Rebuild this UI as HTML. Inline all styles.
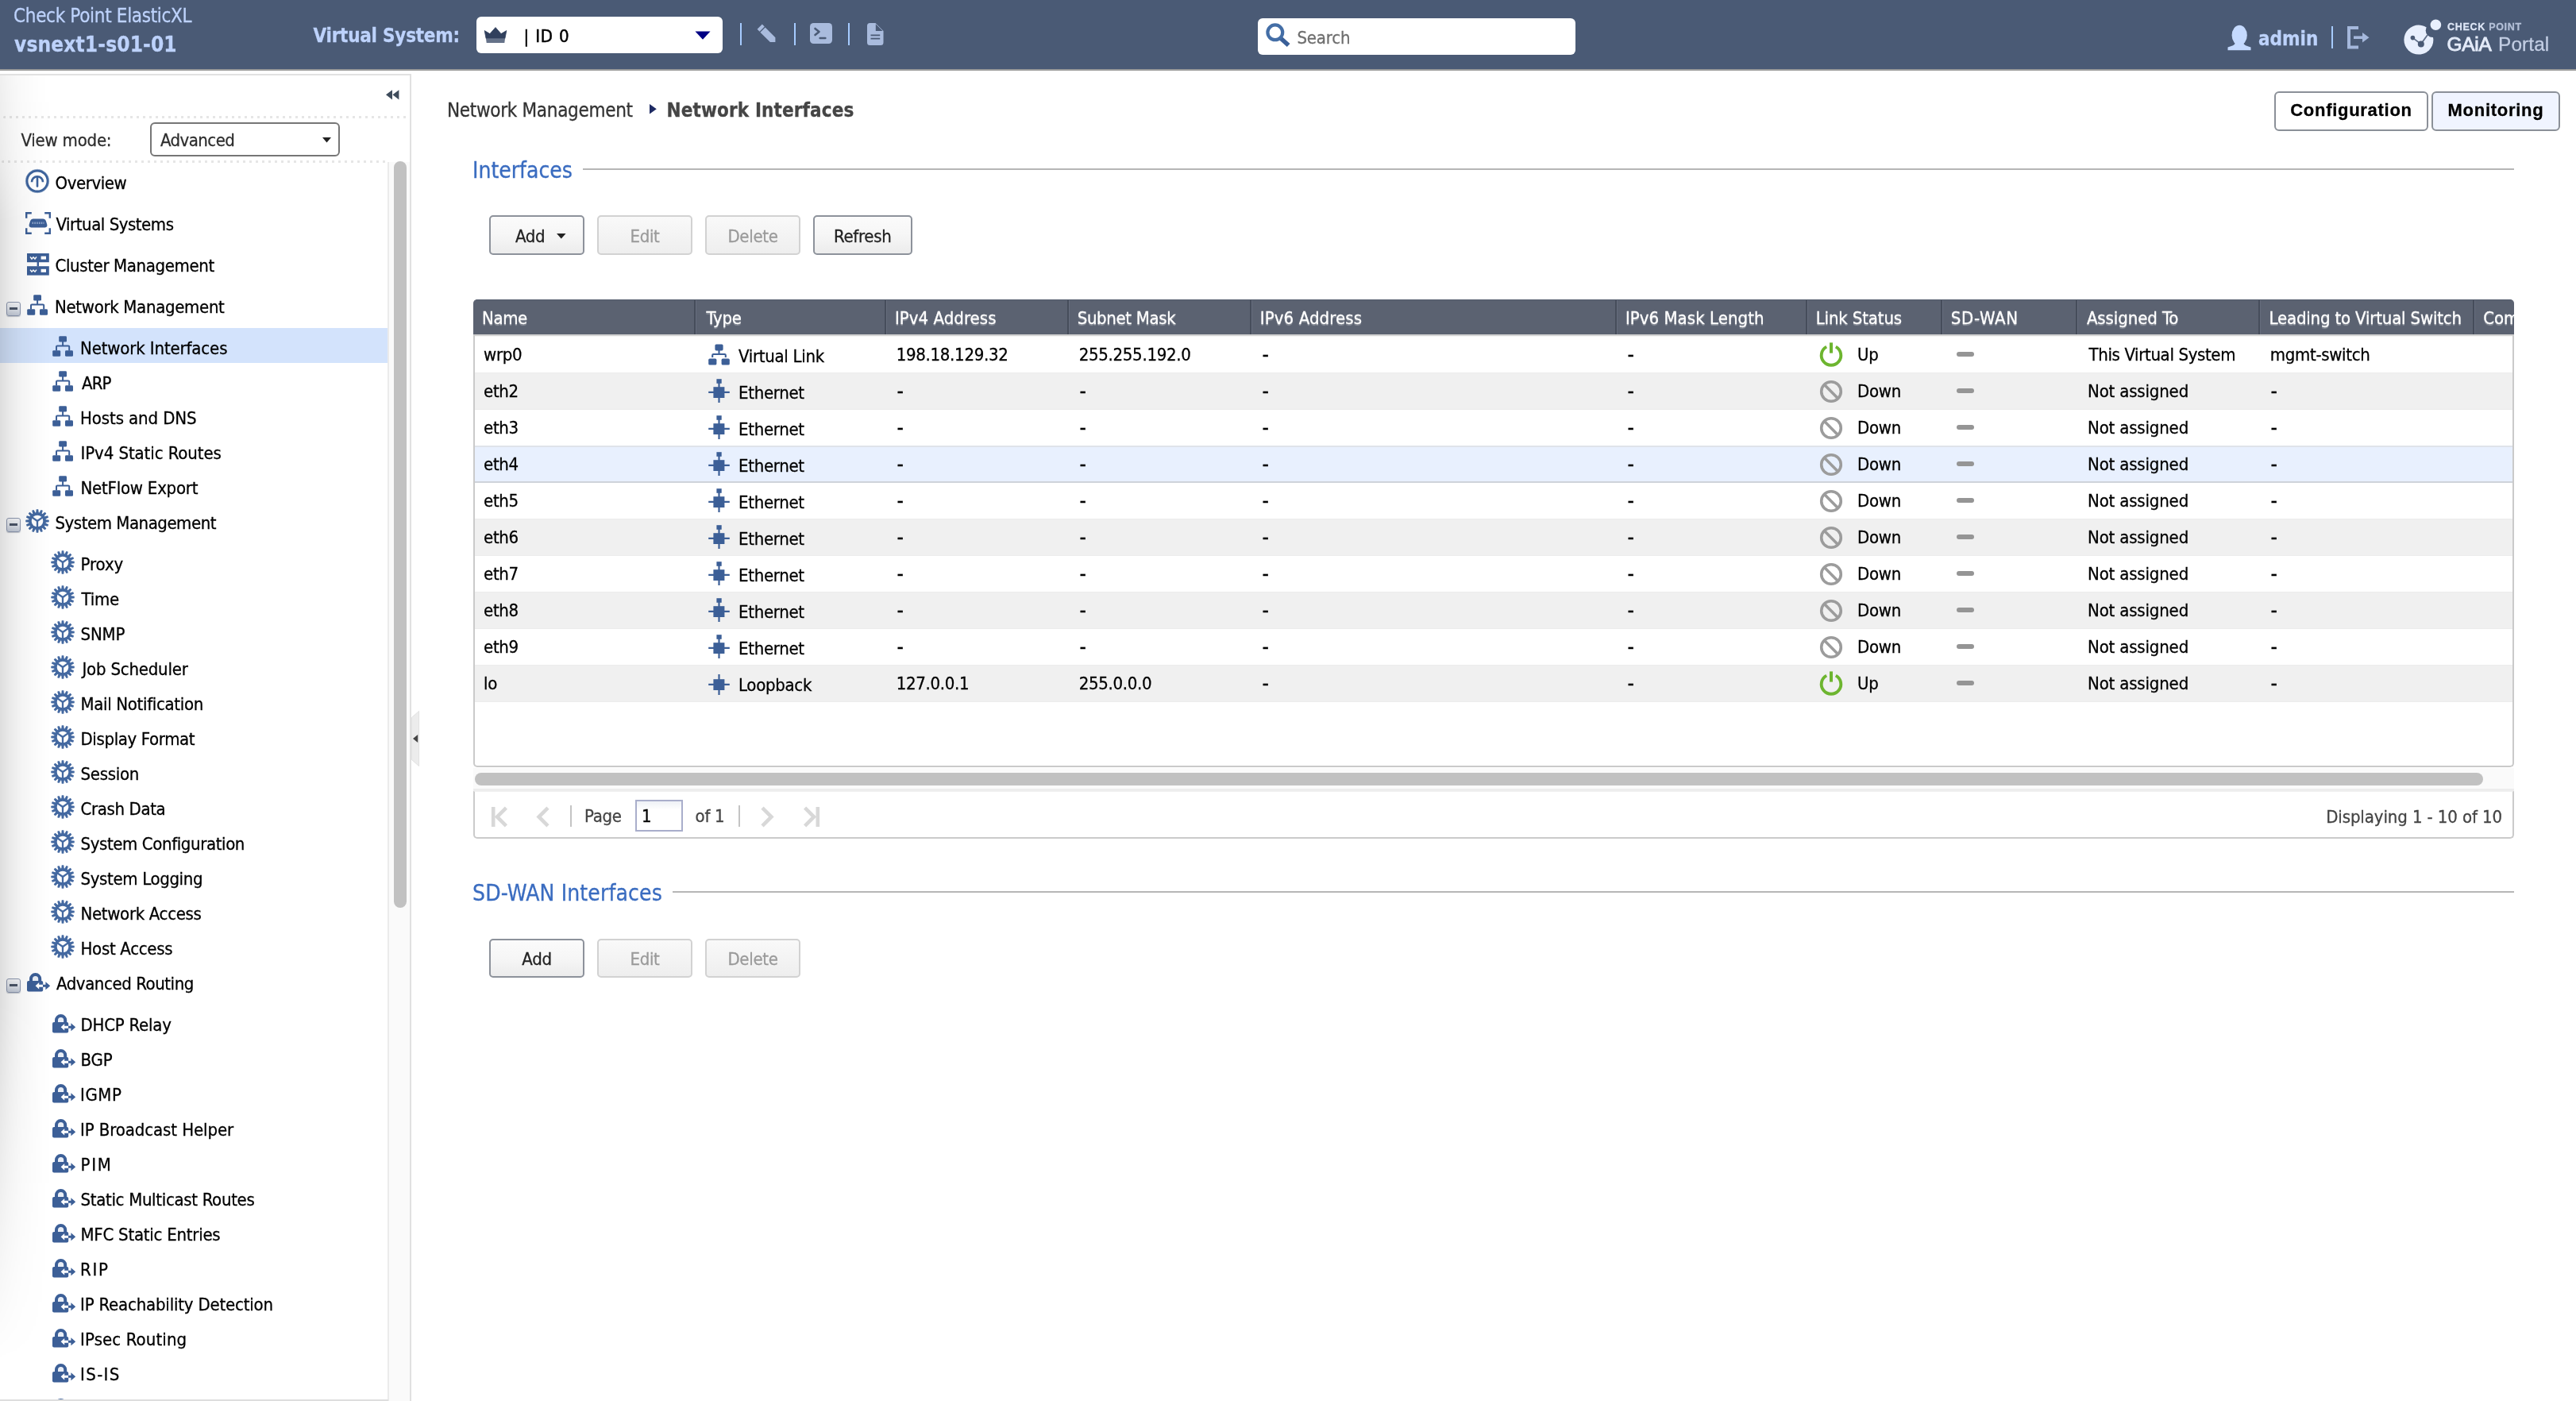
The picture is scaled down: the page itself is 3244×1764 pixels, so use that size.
<!DOCTYPE html>
<html lang="en"><head><meta charset="utf-8"><title>Gaia Portal - Network Interfaces</title>
<style>
html,body{margin:0;padding:0;}
body{width:3244px;height:1764px;overflow:hidden;background:#fff;position:relative;font-family:"DejaVu Sans Condensed","Liberation Sans",sans-serif;}
.a{position:absolute;box-sizing:border-box;}
.t{position:absolute;white-space:nowrap;-webkit-text-stroke:0.28px currentColor;}
svg{overflow:visible;}
.btn{position:absolute;box-sizing:border-box;border:2px solid #8d929b;border-radius:5px;background:linear-gradient(#fbfbfb,#f6f6f6 50%,#ececec);}
.btn.dis{border-color:#d2d2d2;background:linear-gradient(#f9f9f9,#eeeeee);}
.hd{text-shadow:0 2px 1px rgba(255,255,255,.28);}
@media (min-resolution:1.5dppx) and (max-width:2400px){body{width:1622px;height:882px;}#root{transform:scale(.5);transform-origin:0 0;}}
</style></head><body><div id="root" style="position:absolute;left:0;top:0;width:3244px;height:1764px;overflow:hidden;will-change:transform;">
<div class="t" style="left:563px;top:127.30px;font-size:24px;line-height:24px;color:#333;letter-spacing:-0.31px;">Network Management</div>
<svg class="a" style="left:817.5px;top:131px;" width="9" height="12.4" viewBox="0 0 9 12.4"><path d="M0 0 L8.8 6.2 L0 12.4 Z" fill="#1e2a63"/></svg>
<div class="t" style="left:839.5px;top:127.30px;font-size:24px;line-height:24px;color:#454545;font-weight:bold;letter-spacing:0.13px;">Network Interfaces</div>
<div class="a" style="left:2864px;top:115px;width:194px;height:50px;border:2px solid #8b9098;border-radius:6px;background:#fff;"></div>
<div class="t" style="left:2864px;top:128.29px;width:194px;text-align:center;font-family:'Liberation Sans',sans-serif;font-weight:bold;font-size:22px;line-height:22px;color:#000;letter-spacing:.72px;">Configuration</div>
<div class="a" style="left:3062px;top:115px;width:162px;height:50px;border:2px solid #8b9098;border-radius:6px;background:#f0f4ff;"></div>
<div class="t" style="left:3062px;top:128.29px;width:162px;text-align:center;font-family:'Liberation Sans',sans-serif;font-weight:bold;font-size:22px;line-height:22px;color:#000;letter-spacing:.72px;">Monitoring</div>
<div class="t" style="left:595px;top:201.11px;font-size:28px;line-height:28px;color:#3a6cc0;">Interfaces</div><div class="a" style="left:734px;top:212.20000000000002px;width:2432px;height:2px;background:#b6b6b6;"></div>
<div class="btn" style="left:616px;top:271px;width:120px;height:49.5px;"></div><div class="t" style="left:649px;top:286.89px;font-size:22px;line-height:22px;color:#222;letter-spacing:-0.3px;">Add</div><svg class="a" style="left:701px;top:293.6px;" width="11.6" height="6.6" viewBox="0 0 11.6 6.6"><path d="M0 0 H11.6 L5.8 6.6 Z" fill="#222"/></svg>
<div class="btn dis" style="left:752px;top:271px;width:120px;height:49.5px;"></div><div class="t" style="left:752px;top:286.89px;width:120px;text-align:center;font-size:22px;line-height:22px;letter-spacing:-0.3px;color:#9a9a9a;">Edit</div>
<div class="btn dis" style="left:888px;top:271px;width:120px;height:49.5px;"></div><div class="t" style="left:888px;top:286.89px;width:120px;text-align:center;font-size:22px;line-height:22px;letter-spacing:-0.3px;color:#9a9a9a;">Delete</div>
<div class="btn" style="left:1024px;top:271px;width:124.5px;height:49.5px;"></div><div class="t" style="left:1024px;top:286.89px;width:124.5px;text-align:center;font-size:22px;line-height:22px;letter-spacing:-0.3px;color:#222;">Refresh</div>
<div class="a" style="left:596px;top:421px;width:2570px;height:545px;border:2px solid #cacaca;border-top:none;border-radius:0 0 5px 5px;background:#fff;"></div>
<div class="a" style="left:596px;top:377px;width:2570px;height:44px;background:#5b6271;border-top:1px solid #535b6b;border-radius:5px 5px 0 0;overflow:hidden;">
<div class="t hd" style="left:11px;top:11.69px;font-size:22px;line-height:22px;color:#fff;letter-spacing:-0.39px;">Name</div>
<div class="a" style="left:278px;top:0px;width:2px;height:44px;background:#464d5b;"></div>
<div class="a" style="left:280px;top:0px;width:1px;height:44px;background:#666d7d;"></div>
<div class="t hd" style="left:293.50000000000006px;top:11.69px;font-size:22px;line-height:22px;color:#fff;letter-spacing:-0.22px;">Type</div>
<div class="a" style="left:518px;top:0px;width:2px;height:44px;background:#464d5b;"></div>
<div class="a" style="left:520px;top:0px;width:1px;height:44px;background:#666d7d;"></div>
<div class="t hd" style="left:530.9000000000001px;top:11.69px;font-size:22px;line-height:22px;color:#fff;letter-spacing:0.05px;">IPv4 Address</div>
<div class="a" style="left:748px;top:0px;width:2px;height:44px;background:#464d5b;"></div>
<div class="a" style="left:750px;top:0px;width:1px;height:44px;background:#666d7d;"></div>
<div class="t hd" style="left:760.7px;top:11.69px;font-size:22px;line-height:22px;color:#fff;letter-spacing:-0.35px;">Subnet Mask</div>
<div class="a" style="left:978px;top:0px;width:2px;height:44px;background:#464d5b;"></div>
<div class="a" style="left:980px;top:0px;width:1px;height:44px;background:#666d7d;"></div>
<div class="t hd" style="left:990.7px;top:11.69px;font-size:22px;line-height:22px;color:#fff;letter-spacing:0.12px;">IPv6 Address</div>
<div class="a" style="left:1438px;top:0px;width:2px;height:44px;background:#464d5b;"></div>
<div class="a" style="left:1440px;top:0px;width:1px;height:44px;background:#666d7d;"></div>
<div class="t hd" style="left:1450.9px;top:11.69px;font-size:22px;line-height:22px;color:#fff;letter-spacing:0.05px;">IPv6 Mask Length</div>
<div class="a" style="left:1678px;top:0px;width:2px;height:44px;background:#464d5b;"></div>
<div class="a" style="left:1680px;top:0px;width:1px;height:44px;background:#666d7d;"></div>
<div class="t hd" style="left:1690.6999999999998px;top:11.69px;font-size:22px;line-height:22px;color:#fff;letter-spacing:-0.14px;">Link Status</div>
<div class="a" style="left:1848px;top:0px;width:2px;height:44px;background:#464d5b;"></div>
<div class="a" style="left:1850px;top:0px;width:1px;height:44px;background:#666d7d;"></div>
<div class="t hd" style="left:1860.6999999999998px;top:11.69px;font-size:22px;line-height:22px;color:#fff;letter-spacing:0.73px;">SD-WAN</div>
<div class="a" style="left:2018px;top:0px;width:2px;height:44px;background:#464d5b;"></div>
<div class="a" style="left:2020px;top:0px;width:1px;height:44px;background:#666d7d;"></div>
<div class="t hd" style="left:2031.8999999999999px;top:11.69px;font-size:22px;line-height:22px;color:#fff;letter-spacing:-0.09px;">Assigned To</div>
<div class="a" style="left:2248px;top:0px;width:2px;height:44px;background:#464d5b;"></div>
<div class="a" style="left:2250px;top:0px;width:1px;height:44px;background:#666d7d;"></div>
<div class="t hd" style="left:2261.5px;top:11.69px;font-size:22px;line-height:22px;color:#fff;letter-spacing:-0.18px;">Leading to Virtual Switch</div>
<div class="a" style="left:2518px;top:0px;width:2px;height:44px;background:#464d5b;"></div>
<div class="a" style="left:2520px;top:0px;width:1px;height:44px;background:#666d7d;"></div>
<div class="t hd" style="left:2531.2px;top:11.69px;font-size:22px;line-height:22px;color:#fff;">Comment</div>
</div>
<div class="a" style="left:598px;top:421px;width:2566px;height:3px;background:linear-gradient(#d3d3d3,#d3d3d3 66%,#f6f6f6 66%);"></div>
<div class="t" style="left:609px;top:435.59px;font-size:22px;line-height:22px;color:#000;letter-spacing:-0.3px;">wrp0</div>
<svg class="a" style="left:891.5px;top:432.6px;" width="27" height="27" viewBox="0 0 27 27"><rect x="8.4" y="0.4" width="10.2" height="8" rx="1.6" fill="#3c5f97"/><rect x="0.2" y="18.6" width="10.2" height="8" rx="1.6" fill="#3c5f97"/><rect x="16.6" y="18.6" width="10.2" height="8" rx="1.6" fill="#3c5f97"/><path d="M13.5 8 V13 M5.2 17 V14.2 Q5.2 13 6.4 13 H20.6 Q21.8 13 21.8 14.2 V17" fill="none" stroke="#3c5f97" stroke-width="2.1"/></svg>
<div class="t" style="left:930px;top:437.59px;font-size:22px;line-height:22px;color:#000;letter-spacing:-0.3px;">Virtual Link</div>
<div class="t" style="left:1128.7px;top:435.59px;font-size:22px;line-height:22px;color:#000;letter-spacing:-0.3px;">198.18.129.32</div>
<div class="t" style="left:1358.7px;top:435.59px;font-size:22px;line-height:22px;color:#000;letter-spacing:-0.3px;">255.255.192.0</div>
<div class="t" style="left:1589.4px;top:432.80px;font-size:26px;line-height:26px;color:#000;">-</div>
<div class="t" style="left:2049.3999999999996px;top:432.80px;font-size:26px;line-height:26px;color:#000;">-</div>
<svg class="a" style="left:2291px;top:431.2px;" width="30" height="31" viewBox="0 0 30 31"><path d="M9.2 5.6 A12.3 12.3 0 1 0 20.8 5.6" fill="none" stroke="#6db52f" stroke-width="3.9"/><path d="M15 0.4 V13.6" stroke="#6db52f" stroke-width="4"/></svg>
<div class="t" style="left:2339px;top:435.89px;font-size:22px;line-height:22px;color:#000;letter-spacing:-0.3px;">Up</div>
<div class="a" style="left:2464px;top:443.2px;width:22px;height:6px;background:#959595;border-radius:3px;"></div>
<div class="t" style="left:2630.5px;top:435.59px;font-size:22px;line-height:22px;color:#000;letter-spacing:-0.36px;">This Virtual System</div>
<div class="t" style="left:2858.7px;top:435.59px;font-size:22px;line-height:22px;color:#000;letter-spacing:-0.3px;">mgmt-switch</div>
<div class="a" style="left:598px;top:469px;width:2566px;height:47px;background:#f0f0f0;border-top:1px solid #ececec;border-bottom:1px solid #ececec;"></div>
<div class="t" style="left:609px;top:481.59px;font-size:22px;line-height:22px;color:#000;letter-spacing:-0.3px;">eth2</div>
<svg class="a" style="left:891.5px;top:477px;" width="27" height="30" viewBox="0 0 27 30"><rect x="10.4" y="0.2" width="6.3" height="5.6" fill="#3c5f97"/><rect x="6.4" y="10.2" width="14" height="13.8" fill="#3c5f97"/><path d="M13.5 5 V30 M0.2 16.9 H26.8" stroke="#3c5f97" stroke-width="2.2" fill="none"/></svg>
<div class="t" style="left:930px;top:483.59px;font-size:22px;line-height:22px;color:#000;letter-spacing:-0.3px;">Ethernet</div>
<div class="t" style="left:1129.4px;top:478.80px;font-size:26px;line-height:26px;color:#000;">-</div>
<div class="t" style="left:1359.4px;top:478.80px;font-size:26px;line-height:26px;color:#000;">-</div>
<div class="t" style="left:1589.4px;top:478.80px;font-size:26px;line-height:26px;color:#000;">-</div>
<div class="t" style="left:2049.3999999999996px;top:478.80px;font-size:26px;line-height:26px;color:#000;">-</div>
<svg class="a" style="left:2291px;top:478px;" width="30" height="30" viewBox="0 0 30 30"><circle cx="15" cy="15" r="12.3" fill="none" stroke="#9c9c9c" stroke-width="3.6"/><path d="M6.6 6.6 L23.4 23.4" stroke="#9c9c9c" stroke-width="3.6"/></svg>
<div class="t" style="left:2339px;top:481.89px;font-size:22px;line-height:22px;color:#000;letter-spacing:-0.3px;">Down</div>
<div class="a" style="left:2464px;top:489.2px;width:22px;height:6px;background:#959595;border-radius:3px;"></div>
<div class="t" style="left:2629px;top:481.59px;font-size:22px;line-height:22px;color:#000;letter-spacing:-0.17px;">Not assigned</div>
<div class="t" style="left:2859.3999999999996px;top:478.80px;font-size:26px;line-height:26px;color:#000;">-</div>
<div class="t" style="left:609px;top:527.59px;font-size:22px;line-height:22px;color:#000;letter-spacing:-0.3px;">eth3</div>
<svg class="a" style="left:891.5px;top:523px;" width="27" height="30" viewBox="0 0 27 30"><rect x="10.4" y="0.2" width="6.3" height="5.6" fill="#3c5f97"/><rect x="6.4" y="10.2" width="14" height="13.8" fill="#3c5f97"/><path d="M13.5 5 V30 M0.2 16.9 H26.8" stroke="#3c5f97" stroke-width="2.2" fill="none"/></svg>
<div class="t" style="left:930px;top:529.59px;font-size:22px;line-height:22px;color:#000;letter-spacing:-0.3px;">Ethernet</div>
<div class="t" style="left:1129.4px;top:524.80px;font-size:26px;line-height:26px;color:#000;">-</div>
<div class="t" style="left:1359.4px;top:524.80px;font-size:26px;line-height:26px;color:#000;">-</div>
<div class="t" style="left:1589.4px;top:524.80px;font-size:26px;line-height:26px;color:#000;">-</div>
<div class="t" style="left:2049.3999999999996px;top:524.80px;font-size:26px;line-height:26px;color:#000;">-</div>
<svg class="a" style="left:2291px;top:524px;" width="30" height="30" viewBox="0 0 30 30"><circle cx="15" cy="15" r="12.3" fill="none" stroke="#9c9c9c" stroke-width="3.6"/><path d="M6.6 6.6 L23.4 23.4" stroke="#9c9c9c" stroke-width="3.6"/></svg>
<div class="t" style="left:2339px;top:527.89px;font-size:22px;line-height:22px;color:#000;letter-spacing:-0.3px;">Down</div>
<div class="a" style="left:2464px;top:535.2px;width:22px;height:6px;background:#959595;border-radius:3px;"></div>
<div class="t" style="left:2629px;top:527.59px;font-size:22px;line-height:22px;color:#000;letter-spacing:-0.17px;">Not assigned</div>
<div class="t" style="left:2859.3999999999996px;top:524.80px;font-size:26px;line-height:26px;color:#000;">-</div>
<div class="a" style="left:598px;top:561px;width:2566px;height:47px;background:#e8f0fe;border-top:2px solid #dfe3ea;border-bottom:2px solid #cfd3da;"></div>
<div class="t" style="left:609px;top:573.59px;font-size:22px;line-height:22px;color:#000;letter-spacing:-0.3px;">eth4</div>
<svg class="a" style="left:891.5px;top:569px;" width="27" height="30" viewBox="0 0 27 30"><rect x="10.4" y="0.2" width="6.3" height="5.6" fill="#3c5f97"/><rect x="6.4" y="10.2" width="14" height="13.8" fill="#3c5f97"/><path d="M13.5 5 V30 M0.2 16.9 H26.8" stroke="#3c5f97" stroke-width="2.2" fill="none"/></svg>
<div class="t" style="left:930px;top:575.59px;font-size:22px;line-height:22px;color:#000;letter-spacing:-0.3px;">Ethernet</div>
<div class="t" style="left:1129.4px;top:570.80px;font-size:26px;line-height:26px;color:#000;">-</div>
<div class="t" style="left:1359.4px;top:570.80px;font-size:26px;line-height:26px;color:#000;">-</div>
<div class="t" style="left:1589.4px;top:570.80px;font-size:26px;line-height:26px;color:#000;">-</div>
<div class="t" style="left:2049.3999999999996px;top:570.80px;font-size:26px;line-height:26px;color:#000;">-</div>
<svg class="a" style="left:2291px;top:570px;" width="30" height="30" viewBox="0 0 30 30"><circle cx="15" cy="15" r="12.3" fill="none" stroke="#9c9c9c" stroke-width="3.6"/><path d="M6.6 6.6 L23.4 23.4" stroke="#9c9c9c" stroke-width="3.6"/></svg>
<div class="t" style="left:2339px;top:573.89px;font-size:22px;line-height:22px;color:#000;letter-spacing:-0.3px;">Down</div>
<div class="a" style="left:2464px;top:581.2px;width:22px;height:6px;background:#959595;border-radius:3px;"></div>
<div class="t" style="left:2629px;top:573.59px;font-size:22px;line-height:22px;color:#000;letter-spacing:-0.17px;">Not assigned</div>
<div class="t" style="left:2859.3999999999996px;top:570.80px;font-size:26px;line-height:26px;color:#000;">-</div>
<div class="t" style="left:609px;top:619.59px;font-size:22px;line-height:22px;color:#000;letter-spacing:-0.3px;">eth5</div>
<svg class="a" style="left:891.5px;top:615px;" width="27" height="30" viewBox="0 0 27 30"><rect x="10.4" y="0.2" width="6.3" height="5.6" fill="#3c5f97"/><rect x="6.4" y="10.2" width="14" height="13.8" fill="#3c5f97"/><path d="M13.5 5 V30 M0.2 16.9 H26.8" stroke="#3c5f97" stroke-width="2.2" fill="none"/></svg>
<div class="t" style="left:930px;top:621.59px;font-size:22px;line-height:22px;color:#000;letter-spacing:-0.3px;">Ethernet</div>
<div class="t" style="left:1129.4px;top:616.80px;font-size:26px;line-height:26px;color:#000;">-</div>
<div class="t" style="left:1359.4px;top:616.80px;font-size:26px;line-height:26px;color:#000;">-</div>
<div class="t" style="left:1589.4px;top:616.80px;font-size:26px;line-height:26px;color:#000;">-</div>
<div class="t" style="left:2049.3999999999996px;top:616.80px;font-size:26px;line-height:26px;color:#000;">-</div>
<svg class="a" style="left:2291px;top:616px;" width="30" height="30" viewBox="0 0 30 30"><circle cx="15" cy="15" r="12.3" fill="none" stroke="#9c9c9c" stroke-width="3.6"/><path d="M6.6 6.6 L23.4 23.4" stroke="#9c9c9c" stroke-width="3.6"/></svg>
<div class="t" style="left:2339px;top:619.89px;font-size:22px;line-height:22px;color:#000;letter-spacing:-0.3px;">Down</div>
<div class="a" style="left:2464px;top:627.2px;width:22px;height:6px;background:#959595;border-radius:3px;"></div>
<div class="t" style="left:2629px;top:619.59px;font-size:22px;line-height:22px;color:#000;letter-spacing:-0.17px;">Not assigned</div>
<div class="t" style="left:2859.3999999999996px;top:616.80px;font-size:26px;line-height:26px;color:#000;">-</div>
<div class="a" style="left:598px;top:653px;width:2566px;height:47px;background:#f0f0f0;border-top:1px solid #ececec;border-bottom:1px solid #ececec;"></div>
<div class="t" style="left:609px;top:665.59px;font-size:22px;line-height:22px;color:#000;letter-spacing:-0.3px;">eth6</div>
<svg class="a" style="left:891.5px;top:661px;" width="27" height="30" viewBox="0 0 27 30"><rect x="10.4" y="0.2" width="6.3" height="5.6" fill="#3c5f97"/><rect x="6.4" y="10.2" width="14" height="13.8" fill="#3c5f97"/><path d="M13.5 5 V30 M0.2 16.9 H26.8" stroke="#3c5f97" stroke-width="2.2" fill="none"/></svg>
<div class="t" style="left:930px;top:667.59px;font-size:22px;line-height:22px;color:#000;letter-spacing:-0.3px;">Ethernet</div>
<div class="t" style="left:1129.4px;top:662.80px;font-size:26px;line-height:26px;color:#000;">-</div>
<div class="t" style="left:1359.4px;top:662.80px;font-size:26px;line-height:26px;color:#000;">-</div>
<div class="t" style="left:1589.4px;top:662.80px;font-size:26px;line-height:26px;color:#000;">-</div>
<div class="t" style="left:2049.3999999999996px;top:662.80px;font-size:26px;line-height:26px;color:#000;">-</div>
<svg class="a" style="left:2291px;top:662px;" width="30" height="30" viewBox="0 0 30 30"><circle cx="15" cy="15" r="12.3" fill="none" stroke="#9c9c9c" stroke-width="3.6"/><path d="M6.6 6.6 L23.4 23.4" stroke="#9c9c9c" stroke-width="3.6"/></svg>
<div class="t" style="left:2339px;top:665.89px;font-size:22px;line-height:22px;color:#000;letter-spacing:-0.3px;">Down</div>
<div class="a" style="left:2464px;top:673.2px;width:22px;height:6px;background:#959595;border-radius:3px;"></div>
<div class="t" style="left:2629px;top:665.59px;font-size:22px;line-height:22px;color:#000;letter-spacing:-0.17px;">Not assigned</div>
<div class="t" style="left:2859.3999999999996px;top:662.80px;font-size:26px;line-height:26px;color:#000;">-</div>
<div class="t" style="left:609px;top:711.59px;font-size:22px;line-height:22px;color:#000;letter-spacing:-0.3px;">eth7</div>
<svg class="a" style="left:891.5px;top:707px;" width="27" height="30" viewBox="0 0 27 30"><rect x="10.4" y="0.2" width="6.3" height="5.6" fill="#3c5f97"/><rect x="6.4" y="10.2" width="14" height="13.8" fill="#3c5f97"/><path d="M13.5 5 V30 M0.2 16.9 H26.8" stroke="#3c5f97" stroke-width="2.2" fill="none"/></svg>
<div class="t" style="left:930px;top:713.59px;font-size:22px;line-height:22px;color:#000;letter-spacing:-0.3px;">Ethernet</div>
<div class="t" style="left:1129.4px;top:708.80px;font-size:26px;line-height:26px;color:#000;">-</div>
<div class="t" style="left:1359.4px;top:708.80px;font-size:26px;line-height:26px;color:#000;">-</div>
<div class="t" style="left:1589.4px;top:708.80px;font-size:26px;line-height:26px;color:#000;">-</div>
<div class="t" style="left:2049.3999999999996px;top:708.80px;font-size:26px;line-height:26px;color:#000;">-</div>
<svg class="a" style="left:2291px;top:708px;" width="30" height="30" viewBox="0 0 30 30"><circle cx="15" cy="15" r="12.3" fill="none" stroke="#9c9c9c" stroke-width="3.6"/><path d="M6.6 6.6 L23.4 23.4" stroke="#9c9c9c" stroke-width="3.6"/></svg>
<div class="t" style="left:2339px;top:711.89px;font-size:22px;line-height:22px;color:#000;letter-spacing:-0.3px;">Down</div>
<div class="a" style="left:2464px;top:719.2px;width:22px;height:6px;background:#959595;border-radius:3px;"></div>
<div class="t" style="left:2629px;top:711.59px;font-size:22px;line-height:22px;color:#000;letter-spacing:-0.17px;">Not assigned</div>
<div class="t" style="left:2859.3999999999996px;top:708.80px;font-size:26px;line-height:26px;color:#000;">-</div>
<div class="a" style="left:598px;top:745px;width:2566px;height:47px;background:#f0f0f0;border-top:1px solid #ececec;border-bottom:1px solid #ececec;"></div>
<div class="t" style="left:609px;top:757.59px;font-size:22px;line-height:22px;color:#000;letter-spacing:-0.3px;">eth8</div>
<svg class="a" style="left:891.5px;top:753px;" width="27" height="30" viewBox="0 0 27 30"><rect x="10.4" y="0.2" width="6.3" height="5.6" fill="#3c5f97"/><rect x="6.4" y="10.2" width="14" height="13.8" fill="#3c5f97"/><path d="M13.5 5 V30 M0.2 16.9 H26.8" stroke="#3c5f97" stroke-width="2.2" fill="none"/></svg>
<div class="t" style="left:930px;top:759.59px;font-size:22px;line-height:22px;color:#000;letter-spacing:-0.3px;">Ethernet</div>
<div class="t" style="left:1129.4px;top:754.80px;font-size:26px;line-height:26px;color:#000;">-</div>
<div class="t" style="left:1359.4px;top:754.80px;font-size:26px;line-height:26px;color:#000;">-</div>
<div class="t" style="left:1589.4px;top:754.80px;font-size:26px;line-height:26px;color:#000;">-</div>
<div class="t" style="left:2049.3999999999996px;top:754.80px;font-size:26px;line-height:26px;color:#000;">-</div>
<svg class="a" style="left:2291px;top:754px;" width="30" height="30" viewBox="0 0 30 30"><circle cx="15" cy="15" r="12.3" fill="none" stroke="#9c9c9c" stroke-width="3.6"/><path d="M6.6 6.6 L23.4 23.4" stroke="#9c9c9c" stroke-width="3.6"/></svg>
<div class="t" style="left:2339px;top:757.89px;font-size:22px;line-height:22px;color:#000;letter-spacing:-0.3px;">Down</div>
<div class="a" style="left:2464px;top:765.2px;width:22px;height:6px;background:#959595;border-radius:3px;"></div>
<div class="t" style="left:2629px;top:757.59px;font-size:22px;line-height:22px;color:#000;letter-spacing:-0.17px;">Not assigned</div>
<div class="t" style="left:2859.3999999999996px;top:754.80px;font-size:26px;line-height:26px;color:#000;">-</div>
<div class="t" style="left:609px;top:803.59px;font-size:22px;line-height:22px;color:#000;letter-spacing:-0.3px;">eth9</div>
<svg class="a" style="left:891.5px;top:799px;" width="27" height="30" viewBox="0 0 27 30"><rect x="10.4" y="0.2" width="6.3" height="5.6" fill="#3c5f97"/><rect x="6.4" y="10.2" width="14" height="13.8" fill="#3c5f97"/><path d="M13.5 5 V30 M0.2 16.9 H26.8" stroke="#3c5f97" stroke-width="2.2" fill="none"/></svg>
<div class="t" style="left:930px;top:805.59px;font-size:22px;line-height:22px;color:#000;letter-spacing:-0.3px;">Ethernet</div>
<div class="t" style="left:1129.4px;top:800.80px;font-size:26px;line-height:26px;color:#000;">-</div>
<div class="t" style="left:1359.4px;top:800.80px;font-size:26px;line-height:26px;color:#000;">-</div>
<div class="t" style="left:1589.4px;top:800.80px;font-size:26px;line-height:26px;color:#000;">-</div>
<div class="t" style="left:2049.3999999999996px;top:800.80px;font-size:26px;line-height:26px;color:#000;">-</div>
<svg class="a" style="left:2291px;top:800px;" width="30" height="30" viewBox="0 0 30 30"><circle cx="15" cy="15" r="12.3" fill="none" stroke="#9c9c9c" stroke-width="3.6"/><path d="M6.6 6.6 L23.4 23.4" stroke="#9c9c9c" stroke-width="3.6"/></svg>
<div class="t" style="left:2339px;top:803.89px;font-size:22px;line-height:22px;color:#000;letter-spacing:-0.3px;">Down</div>
<div class="a" style="left:2464px;top:811.2px;width:22px;height:6px;background:#959595;border-radius:3px;"></div>
<div class="t" style="left:2629px;top:803.59px;font-size:22px;line-height:22px;color:#000;letter-spacing:-0.17px;">Not assigned</div>
<div class="t" style="left:2859.3999999999996px;top:800.80px;font-size:26px;line-height:26px;color:#000;">-</div>
<div class="a" style="left:598px;top:837px;width:2566px;height:47px;background:#f0f0f0;border-top:1px solid #ececec;border-bottom:1px solid #ececec;"></div>
<div class="t" style="left:609px;top:849.59px;font-size:22px;line-height:22px;color:#000;letter-spacing:-0.3px;">lo</div>
<svg class="a" style="left:891.5px;top:845px;" width="27" height="30" viewBox="0 0 27 30"><rect x="6.4" y="10.2" width="14" height="13.8" fill="#3c5f97"/><path d="M13.5 4 V30 M0.2 16.9 H26.8" stroke="#3c5f97" stroke-width="2.2" fill="none"/></svg>
<div class="t" style="left:930px;top:851.59px;font-size:22px;line-height:22px;color:#000;letter-spacing:-0.3px;">Loopback</div>
<div class="t" style="left:1128.7px;top:849.59px;font-size:22px;line-height:22px;color:#000;letter-spacing:-0.3px;">127.0.0.1</div>
<div class="t" style="left:1358.7px;top:849.59px;font-size:22px;line-height:22px;color:#000;letter-spacing:-0.3px;">255.0.0.0</div>
<div class="t" style="left:1589.4px;top:846.80px;font-size:26px;line-height:26px;color:#000;">-</div>
<div class="t" style="left:2049.3999999999996px;top:846.80px;font-size:26px;line-height:26px;color:#000;">-</div>
<svg class="a" style="left:2291px;top:845.2px;" width="30" height="31" viewBox="0 0 30 31"><path d="M9.2 5.6 A12.3 12.3 0 1 0 20.8 5.6" fill="none" stroke="#6db52f" stroke-width="3.9"/><path d="M15 0.4 V13.6" stroke="#6db52f" stroke-width="4"/></svg>
<div class="t" style="left:2339px;top:849.89px;font-size:22px;line-height:22px;color:#000;letter-spacing:-0.3px;">Up</div>
<div class="a" style="left:2464px;top:857.2px;width:22px;height:6px;background:#959595;border-radius:3px;"></div>
<div class="t" style="left:2629px;top:849.59px;font-size:22px;line-height:22px;color:#000;letter-spacing:-0.17px;">Not assigned</div>
<div class="t" style="left:2859.3999999999996px;top:846.80px;font-size:26px;line-height:26px;color:#000;">-</div>
<div class="a" style="left:596px;top:967px;width:2570px;height:29px;background:#fafafa;border-bottom:3px solid #ededed;"></div>
<div class="a" style="left:598px;top:973px;width:2529px;height:16px;background:#c1c1c1;border-radius:8px;"></div>
<div class="a" style="left:596px;top:996px;width:2570px;height:60px;border:2px solid #cbcbcb;border-top:1px solid #f0f0f0;border-radius:0 0 5px 5px;background:#fff;"></div>
<svg class="a" style="left:619px;top:1016px;" width="20" height="25" viewBox="0 0 20 25"><path d="M2.2 0 V25" stroke="#d8d8d8" stroke-width="4.6"/><path d="M18.4 1.2 L7 12.5 L18.4 23.8" fill="none" stroke="#d8d8d8" stroke-width="4.6"/></svg>
<svg class="a" style="left:676px;top:1016px;" width="16" height="25" viewBox="0 0 16 25"><path d="M14 1.2 L2.6 12.5 L14 23.8" fill="none" stroke="#d8d8d8" stroke-width="4.6"/></svg>
<div class="a" style="left:718px;top:1014px;width:2px;height:27px;background:#c4c4c4;"></div>
<div class="t" style="left:736px;top:1017.49px;font-size:22px;line-height:22px;color:#444;letter-spacing:-0.3px;">Page</div>
<div class="a" style="left:800px;top:1007px;width:59.5px;height:39.5px;border:2px solid #a9aecb;background:linear-gradient(#eef1f6,#fff 30%);"></div>
<div class="t" style="left:808px;top:1017.49px;font-size:22px;line-height:22px;color:#000;letter-spacing:-0.3px;">1</div>
<div class="t" style="left:875.6px;top:1017.49px;font-size:22px;line-height:22px;color:#444;letter-spacing:-0.3px;">of 1</div>
<div class="a" style="left:930px;top:1014px;width:2px;height:27px;background:#c4c4c4;"></div>
<svg class="a" style="left:957.5px;top:1016px;" width="16" height="25" viewBox="0 0 16 25"><path d="M2 1.2 L13.4 12.5 L2 23.8" fill="none" stroke="#d8d8d8" stroke-width="4.6"/></svg>
<svg class="a" style="left:1012px;top:1016px;" width="20" height="25" viewBox="0 0 20 25"><path d="M17.8 0 V25" stroke="#d8d8d8" stroke-width="4.6"/><path d="M1.6 1.2 L13 12.5 L1.6 23.8" fill="none" stroke="#d8d8d8" stroke-width="4.6"/></svg>
<div class="t" style="right:93px;top:1017.69px;font-size:22px;line-height:22px;color:#444;letter-spacing:-0.1px;">Displaying 1 - 10 of 10</div>
<div class="t" style="left:595px;top:1111.11px;font-size:28px;line-height:28px;color:#3a6cc0;letter-spacing:0.13px;">SD-WAN Interfaces</div><div class="a" style="left:847px;top:1122.2px;width:2319px;height:2px;background:#b6b6b6;"></div>
<div class="btn" style="left:616px;top:1181.5px;width:120px;height:49.5px;"></div><div class="t" style="left:616px;top:1197.39px;width:120px;text-align:center;font-size:22px;line-height:22px;letter-spacing:-0.3px;color:#222;">Add</div>
<div class="btn dis" style="left:752px;top:1181.5px;width:120px;height:49.5px;"></div><div class="t" style="left:752px;top:1197.39px;width:120px;text-align:center;font-size:22px;line-height:22px;letter-spacing:-0.3px;color:#9a9a9a;">Edit</div>
<div class="btn dis" style="left:888px;top:1181.5px;width:120px;height:49.5px;"></div><div class="t" style="left:888px;top:1197.39px;width:120px;text-align:center;font-size:22px;line-height:22px;letter-spacing:-0.3px;color:#9a9a9a;">Delete</div>
<div class="a" style="left:-4px;top:93px;width:522px;height:1700px;border:2px solid #e1e1e1;background:#fff;"></div>
<div class="a" style="left:488px;top:204px;width:28px;height:1600px;background:#fafafa;border-left:2px solid #ebebeb;"></div>
<div class="a" style="left:496px;top:203px;width:16px;height:940px;background:#c1c1c1;border-radius:8px;"></div>
<svg class="a" style="left:486px;top:113px;" width="17" height="13" viewBox="0 0 17 13"><path d="M0 6.3 L8 0.2 V12.4 Z M8.4 6.3 L16.4 0.2 V12.4 Z" fill="#3f4c5c"/></svg>
<div class="a" style="left:4px;top:146px;width:512px;height:3px;background:repeating-linear-gradient(90deg,#e6e6e6 0,#e6e6e6 3px,transparent 3px,transparent 8px);border-radius:1.5px;"></div>
<div class="a" style="left:2px;top:202px;width:486px;height:3px;background:repeating-linear-gradient(90deg,#e6e6e6 0,#e6e6e6 3px,transparent 3px,transparent 8px);border-radius:1.5px;"></div>
<div class="t" style="left:26.5px;top:166.49px;font-size:22px;line-height:22px;color:#2e2e2e;letter-spacing:-0.22px;">View mode:</div>
<div class="a" style="left:189px;top:154px;width:239px;height:42.5px;border:2px solid #767676;border-radius:6px;background:#fff;"></div>
<div class="t" style="left:202px;top:166.49px;font-size:22px;line-height:22px;color:#2e2e2e;letter-spacing:-0.55px;">Advanced</div>
<svg class="a" style="left:405.5px;top:173px;" width="11" height="6.4" viewBox="0 0 11 6.4"><path d="M0 0 H11 L5.5 6.4 Z" fill="#222"/></svg>
<svg class="a" style="left:32px;top:213.0px;" width="30" height="30" viewBox="0 0 30 30"><circle cx="15" cy="15" r="13.2" fill="#fff" stroke="#3d639c" stroke-width="3.2"/><circle cx="15" cy="15" r="14.8" fill="none" stroke="#9db3d3" stroke-width="0.8" opacity=".7"/><path d="M8 16.2 a7 7 0 0 1 14 0" fill="none" stroke="#3d639c" stroke-width="2.6"/><path d="M15 10 V21.5" stroke="#3d639c" stroke-width="2.6" stroke-linecap="round"/></svg>
<div class="t" style="left:69.5px;top:220.29px;font-size:22px;line-height:22px;color:#000;letter-spacing:-0.41px;">Overview</div>
<svg class="a" style="left:32px;top:267.0px;" width="32" height="28" viewBox="0 0 32 28"><path d="M1.2 7.8 V1.2 H7.8 M24.200000000000003 1.2 H30.8 V7.8 M30.8 20.200000000000003 V26.8 H24.200000000000003 M7.8 26.8 H1.2 V20.200000000000003" fill="none" stroke="#3c5f97" stroke-width="2.4"/><path d="M9.5 8.4 H22.5 Q25 8.4 25.8 11 L27.2 15.6 Q28.2 19.4 24.6 19.4 H7.4 Q3.8 19.4 4.8 15.6 L6.2 11 Q7 8.4 9.5 8.4 Z" fill="#3c5f97"/><path d="M8.5 13.8 H23.5" stroke="#8ea6cc" stroke-width="2.6" stroke-dasharray="1.6 1.2"/></svg>
<div class="t" style="left:70.5px;top:272.29px;font-size:22px;line-height:22px;color:#000;letter-spacing:-0.47px;">Virtual Systems</div>
<svg class="a" style="left:34px;top:319.0px;" width="28" height="28" viewBox="0 0 28 28"><rect x="0" y="0" width="27.8" height="11.2" fill="#3c5f97"/><rect x="0" y="16.2" width="27.8" height="11.4" fill="#3c5f97"/><rect x="12.6" y="11" width="2.4" height="5.4" fill="#3c5f97"/><path d="M4 4.4 L6 7 L8 4.8 L10 7 L12 4.4 M4 20.6 L6 23.2 L8 21 L10 23.2 L12 20.6" fill="none" stroke="#fff" stroke-width="1.5"/><rect x="17.6" y="3.6" width="6.4" height="4" fill="#fff"/><rect x="17.6" y="19.8" width="6.4" height="4" fill="#fff"/></svg>
<div class="t" style="left:69.5px;top:324.29px;font-size:22px;line-height:22px;color:#000;letter-spacing:-0.37px;">Cluster Management</div>
<div class="a" style="left:8px;top:379.5px;width:18px;height:18px;border:1.6px solid #8f9ab2;border-radius:3px;background:linear-gradient(#f7f8fb,#e4e8ef 45%,#c5ccd9);box-shadow:0 1px 1px rgba(90,100,120,.35);"></div><div class="a" style="left:11.8px;top:386.9px;width:10.6px;height:3px;background:#4b5669;"></div>
<svg class="a" style="left:34px;top:370.8px;" width="26" height="26" viewBox="0 0 26 26"><rect x="8.2" y="0.2" width="9.8" height="7.4" rx="1.4" fill="#3c5f97"/><rect x="0.2" y="18.2" width="10" height="7.6" rx="1.4" fill="#3c5f97"/><rect x="16" y="18.2" width="10" height="7.6" rx="1.4" fill="#3c5f97"/><path d="M13.1 7 V12.4 M5 18.6 V13.6 Q5 12.4 6.2 12.4 H20 Q21.2 12.4 21.2 13.6 V18.6" fill="none" stroke="#3c5f97" stroke-width="2"/></svg>
<div class="t" style="left:69.0px;top:376.29px;font-size:22px;line-height:22px;color:#000;letter-spacing:-0.32px;">Network Management</div>
<div class="a" style="left:0px;top:413.0px;width:488px;height:44px;background:#d3e3fc;"></div>
<svg class="a" style="left:66px;top:422.8px;" width="26" height="26" viewBox="0 0 26 26"><rect x="8.2" y="0.2" width="9.8" height="7.4" rx="1.4" fill="#3c5f97"/><rect x="0.2" y="18.2" width="10" height="7.6" rx="1.4" fill="#3c5f97"/><rect x="16" y="18.2" width="10" height="7.6" rx="1.4" fill="#3c5f97"/><path d="M13.1 7 V12.4 M5 18.6 V13.6 Q5 12.4 6.2 12.4 H20 Q21.2 12.4 21.2 13.6 V18.6" fill="none" stroke="#3c5f97" stroke-width="2"/></svg>
<div class="t" style="left:101.0px;top:428.29px;font-size:22px;line-height:22px;color:#000;letter-spacing:-0.14px;">Network Interfaces</div>
<svg class="a" style="left:66px;top:466.8px;" width="26" height="26" viewBox="0 0 26 26"><rect x="8.2" y="0.2" width="9.8" height="7.4" rx="1.4" fill="#3c5f97"/><rect x="0.2" y="18.2" width="10" height="7.6" rx="1.4" fill="#3c5f97"/><rect x="16" y="18.2" width="10" height="7.6" rx="1.4" fill="#3c5f97"/><path d="M13.1 7 V12.4 M5 18.6 V13.6 Q5 12.4 6.2 12.4 H20 Q21.2 12.4 21.2 13.6 V18.6" fill="none" stroke="#3c5f97" stroke-width="2"/></svg>
<div class="t" style="left:103.0px;top:472.29px;font-size:22px;line-height:22px;color:#000;letter-spacing:-0.85px;">ARP</div>
<svg class="a" style="left:66px;top:510.8px;" width="26" height="26" viewBox="0 0 26 26"><rect x="8.2" y="0.2" width="9.8" height="7.4" rx="1.4" fill="#3c5f97"/><rect x="0.2" y="18.2" width="10" height="7.6" rx="1.4" fill="#3c5f97"/><rect x="16" y="18.2" width="10" height="7.6" rx="1.4" fill="#3c5f97"/><path d="M13.1 7 V12.4 M5 18.6 V13.6 Q5 12.4 6.2 12.4 H20 Q21.2 12.4 21.2 13.6 V18.6" fill="none" stroke="#3c5f97" stroke-width="2"/></svg>
<div class="t" style="left:101.0px;top:516.29px;font-size:22px;line-height:22px;color:#000;letter-spacing:-0.1px;">Hosts and DNS</div>
<svg class="a" style="left:66px;top:554.8px;" width="26" height="26" viewBox="0 0 26 26"><rect x="8.2" y="0.2" width="9.8" height="7.4" rx="1.4" fill="#3c5f97"/><rect x="0.2" y="18.2" width="10" height="7.6" rx="1.4" fill="#3c5f97"/><rect x="16" y="18.2" width="10" height="7.6" rx="1.4" fill="#3c5f97"/><path d="M13.1 7 V12.4 M5 18.6 V13.6 Q5 12.4 6.2 12.4 H20 Q21.2 12.4 21.2 13.6 V18.6" fill="none" stroke="#3c5f97" stroke-width="2"/></svg>
<div class="t" style="left:101.5px;top:560.29px;font-size:22px;line-height:22px;color:#000;letter-spacing:-0.09px;">IPv4 Static Routes</div>
<svg class="a" style="left:66px;top:598.8px;" width="26" height="26" viewBox="0 0 26 26"><rect x="8.2" y="0.2" width="9.8" height="7.4" rx="1.4" fill="#3c5f97"/><rect x="0.2" y="18.2" width="10" height="7.6" rx="1.4" fill="#3c5f97"/><rect x="16" y="18.2" width="10" height="7.6" rx="1.4" fill="#3c5f97"/><path d="M13.1 7 V12.4 M5 18.6 V13.6 Q5 12.4 6.2 12.4 H20 Q21.2 12.4 21.2 13.6 V18.6" fill="none" stroke="#3c5f97" stroke-width="2"/></svg>
<div class="t" style="left:101.5px;top:604.29px;font-size:22px;line-height:22px;color:#000;letter-spacing:-0.23px;">NetFlow Export</div>
<div class="a" style="left:8px;top:651.5px;width:18px;height:18px;border:1.6px solid #8f9ab2;border-radius:3px;background:linear-gradient(#f7f8fb,#e4e8ef 45%,#c5ccd9);box-shadow:0 1px 1px rgba(90,100,120,.35);"></div><div class="a" style="left:11.8px;top:658.9px;width:10.6px;height:3px;background:#4b5669;"></div>
<svg class="a" style="left:31.8px;top:641.2px;" width="30" height="30" viewBox="0 0 30 30"><path d="M13.28 4.34 L13.74 0.25 L16.26 0.25 L16.72 4.34 L17.49 4.49 L19.48 0.90 L21.80 1.86 L20.67 5.81 L21.32 6.24 L24.54 3.68 L26.32 5.46 L23.76 8.68 L24.19 9.33 L28.14 8.20 L29.10 10.52 L25.51 12.51 L25.66 13.28 L29.75 13.74 L29.75 16.26 L25.66 16.72 L25.51 17.49 L29.10 19.48 L28.14 21.80 L24.19 20.67 L23.76 21.32 L26.32 24.54 L24.54 26.32 L21.32 23.76 L20.67 24.19 L21.80 28.14 L19.48 29.10 L17.49 25.51 L16.72 25.66 L16.26 29.75 L13.74 29.75 L13.28 25.66 L12.51 25.51 L10.52 29.10 L8.20 28.14 L9.33 24.19 L8.68 23.76 L5.46 26.32 L3.68 24.54 L6.24 21.32 L5.81 20.67 L1.86 21.80 L0.90 19.48 L4.49 17.49 L4.34 16.72 L0.25 16.26 L0.25 13.74 L4.34 13.28 L4.49 12.51 L0.90 10.52 L1.86 8.20 L5.81 9.33 L6.24 8.68 L3.68 5.46 L5.46 3.68 L8.68 6.24 L9.33 5.81 L8.20 1.86 L10.52 0.90 L12.51 4.49 Z" fill="#4469a1"/><circle cx="15" cy="15" r="7.3" fill="#fdfdfe"/><path d="M15 15 L15.00 23.50 M15 15 L8.04 10.12 M15 15 L21.96 10.12 " stroke="#4469a1" stroke-width="2.3" fill="none"/></svg>
<div class="t" style="left:69.5px;top:648.29px;font-size:22px;line-height:22px;color:#000;letter-spacing:-0.47px;">System Management</div>
<svg class="a" style="left:64px;top:693.0px;" width="30" height="30" viewBox="0 0 30 30"><path d="M13.28 4.34 L13.74 0.25 L16.26 0.25 L16.72 4.34 L17.49 4.49 L19.48 0.90 L21.80 1.86 L20.67 5.81 L21.32 6.24 L24.54 3.68 L26.32 5.46 L23.76 8.68 L24.19 9.33 L28.14 8.20 L29.10 10.52 L25.51 12.51 L25.66 13.28 L29.75 13.74 L29.75 16.26 L25.66 16.72 L25.51 17.49 L29.10 19.48 L28.14 21.80 L24.19 20.67 L23.76 21.32 L26.32 24.54 L24.54 26.32 L21.32 23.76 L20.67 24.19 L21.80 28.14 L19.48 29.10 L17.49 25.51 L16.72 25.66 L16.26 29.75 L13.74 29.75 L13.28 25.66 L12.51 25.51 L10.52 29.10 L8.20 28.14 L9.33 24.19 L8.68 23.76 L5.46 26.32 L3.68 24.54 L6.24 21.32 L5.81 20.67 L1.86 21.80 L0.90 19.48 L4.49 17.49 L4.34 16.72 L0.25 16.26 L0.25 13.74 L4.34 13.28 L4.49 12.51 L0.90 10.52 L1.86 8.20 L5.81 9.33 L6.24 8.68 L3.68 5.46 L5.46 3.68 L8.68 6.24 L9.33 5.81 L8.20 1.86 L10.52 0.90 L12.51 4.49 Z" fill="#4469a1"/><circle cx="15" cy="15" r="7.3" fill="#fdfdfe"/><path d="M15 15 L15.00 23.50 M15 15 L8.04 10.12 M15 15 L21.96 10.12 " stroke="#4469a1" stroke-width="2.3" fill="none"/></svg>
<div class="t" style="left:101.5px;top:700.29px;font-size:22px;line-height:22px;color:#000;letter-spacing:-0.07px;">Proxy</div>
<svg class="a" style="left:64px;top:737.0px;" width="30" height="30" viewBox="0 0 30 30"><path d="M13.28 4.34 L13.74 0.25 L16.26 0.25 L16.72 4.34 L17.49 4.49 L19.48 0.90 L21.80 1.86 L20.67 5.81 L21.32 6.24 L24.54 3.68 L26.32 5.46 L23.76 8.68 L24.19 9.33 L28.14 8.20 L29.10 10.52 L25.51 12.51 L25.66 13.28 L29.75 13.74 L29.75 16.26 L25.66 16.72 L25.51 17.49 L29.10 19.48 L28.14 21.80 L24.19 20.67 L23.76 21.32 L26.32 24.54 L24.54 26.32 L21.32 23.76 L20.67 24.19 L21.80 28.14 L19.48 29.10 L17.49 25.51 L16.72 25.66 L16.26 29.75 L13.74 29.75 L13.28 25.66 L12.51 25.51 L10.52 29.10 L8.20 28.14 L9.33 24.19 L8.68 23.76 L5.46 26.32 L3.68 24.54 L6.24 21.32 L5.81 20.67 L1.86 21.80 L0.90 19.48 L4.49 17.49 L4.34 16.72 L0.25 16.26 L0.25 13.74 L4.34 13.28 L4.49 12.51 L0.90 10.52 L1.86 8.20 L5.81 9.33 L6.24 8.68 L3.68 5.46 L5.46 3.68 L8.68 6.24 L9.33 5.81 L8.20 1.86 L10.52 0.90 L12.51 4.49 Z" fill="#4469a1"/><circle cx="15" cy="15" r="7.3" fill="#fdfdfe"/><path d="M15 15 L15.00 23.50 M15 15 L8.04 10.12 M15 15 L21.96 10.12 " stroke="#4469a1" stroke-width="2.3" fill="none"/></svg>
<div class="t" style="left:102.5px;top:744.29px;font-size:22px;line-height:22px;color:#000;letter-spacing:-0.23px;">Time</div>
<svg class="a" style="left:64px;top:781.0px;" width="30" height="30" viewBox="0 0 30 30"><path d="M13.28 4.34 L13.74 0.25 L16.26 0.25 L16.72 4.34 L17.49 4.49 L19.48 0.90 L21.80 1.86 L20.67 5.81 L21.32 6.24 L24.54 3.68 L26.32 5.46 L23.76 8.68 L24.19 9.33 L28.14 8.20 L29.10 10.52 L25.51 12.51 L25.66 13.28 L29.75 13.74 L29.75 16.26 L25.66 16.72 L25.51 17.49 L29.10 19.48 L28.14 21.80 L24.19 20.67 L23.76 21.32 L26.32 24.54 L24.54 26.32 L21.32 23.76 L20.67 24.19 L21.80 28.14 L19.48 29.10 L17.49 25.51 L16.72 25.66 L16.26 29.75 L13.74 29.75 L13.28 25.66 L12.51 25.51 L10.52 29.10 L8.20 28.14 L9.33 24.19 L8.68 23.76 L5.46 26.32 L3.68 24.54 L6.24 21.32 L5.81 20.67 L1.86 21.80 L0.90 19.48 L4.49 17.49 L4.34 16.72 L0.25 16.26 L0.25 13.74 L4.34 13.28 L4.49 12.51 L0.90 10.52 L1.86 8.20 L5.81 9.33 L6.24 8.68 L3.68 5.46 L5.46 3.68 L8.68 6.24 L9.33 5.81 L8.20 1.86 L10.52 0.90 L12.51 4.49 Z" fill="#4469a1"/><circle cx="15" cy="15" r="7.3" fill="#fdfdfe"/><path d="M15 15 L15.00 23.50 M15 15 L8.04 10.12 M15 15 L21.96 10.12 " stroke="#4469a1" stroke-width="2.3" fill="none"/></svg>
<div class="t" style="left:101.5px;top:788.29px;font-size:22px;line-height:22px;color:#000;letter-spacing:-0.17px;">SNMP</div>
<svg class="a" style="left:64px;top:825.0px;" width="30" height="30" viewBox="0 0 30 30"><path d="M13.28 4.34 L13.74 0.25 L16.26 0.25 L16.72 4.34 L17.49 4.49 L19.48 0.90 L21.80 1.86 L20.67 5.81 L21.32 6.24 L24.54 3.68 L26.32 5.46 L23.76 8.68 L24.19 9.33 L28.14 8.20 L29.10 10.52 L25.51 12.51 L25.66 13.28 L29.75 13.74 L29.75 16.26 L25.66 16.72 L25.51 17.49 L29.10 19.48 L28.14 21.80 L24.19 20.67 L23.76 21.32 L26.32 24.54 L24.54 26.32 L21.32 23.76 L20.67 24.19 L21.80 28.14 L19.48 29.10 L17.49 25.51 L16.72 25.66 L16.26 29.75 L13.74 29.75 L13.28 25.66 L12.51 25.51 L10.52 29.10 L8.20 28.14 L9.33 24.19 L8.68 23.76 L5.46 26.32 L3.68 24.54 L6.24 21.32 L5.81 20.67 L1.86 21.80 L0.90 19.48 L4.49 17.49 L4.34 16.72 L0.25 16.26 L0.25 13.74 L4.34 13.28 L4.49 12.51 L0.90 10.52 L1.86 8.20 L5.81 9.33 L6.24 8.68 L3.68 5.46 L5.46 3.68 L8.68 6.24 L9.33 5.81 L8.20 1.86 L10.52 0.90 L12.51 4.49 Z" fill="#4469a1"/><circle cx="15" cy="15" r="7.3" fill="#fdfdfe"/><path d="M15 15 L15.00 23.50 M15 15 L8.04 10.12 M15 15 L21.96 10.12 " stroke="#4469a1" stroke-width="2.3" fill="none"/></svg>
<div class="t" style="left:103.5px;top:832.29px;font-size:22px;line-height:22px;color:#000;letter-spacing:-0.22px;">Job Scheduler</div>
<svg class="a" style="left:64px;top:869.0px;" width="30" height="30" viewBox="0 0 30 30"><path d="M13.28 4.34 L13.74 0.25 L16.26 0.25 L16.72 4.34 L17.49 4.49 L19.48 0.90 L21.80 1.86 L20.67 5.81 L21.32 6.24 L24.54 3.68 L26.32 5.46 L23.76 8.68 L24.19 9.33 L28.14 8.20 L29.10 10.52 L25.51 12.51 L25.66 13.28 L29.75 13.74 L29.75 16.26 L25.66 16.72 L25.51 17.49 L29.10 19.48 L28.14 21.80 L24.19 20.67 L23.76 21.32 L26.32 24.54 L24.54 26.32 L21.32 23.76 L20.67 24.19 L21.80 28.14 L19.48 29.10 L17.49 25.51 L16.72 25.66 L16.26 29.75 L13.74 29.75 L13.28 25.66 L12.51 25.51 L10.52 29.10 L8.20 28.14 L9.33 24.19 L8.68 23.76 L5.46 26.32 L3.68 24.54 L6.24 21.32 L5.81 20.67 L1.86 21.80 L0.90 19.48 L4.49 17.49 L4.34 16.72 L0.25 16.26 L0.25 13.74 L4.34 13.28 L4.49 12.51 L0.90 10.52 L1.86 8.20 L5.81 9.33 L6.24 8.68 L3.68 5.46 L5.46 3.68 L8.68 6.24 L9.33 5.81 L8.20 1.86 L10.52 0.90 L12.51 4.49 Z" fill="#4469a1"/><circle cx="15" cy="15" r="7.3" fill="#fdfdfe"/><path d="M15 15 L15.00 23.50 M15 15 L8.04 10.12 M15 15 L21.96 10.12 " stroke="#4469a1" stroke-width="2.3" fill="none"/></svg>
<div class="t" style="left:101.5px;top:876.29px;font-size:22px;line-height:22px;color:#000;letter-spacing:-0.33px;">Mail Notification</div>
<svg class="a" style="left:64px;top:913.0px;" width="30" height="30" viewBox="0 0 30 30"><path d="M13.28 4.34 L13.74 0.25 L16.26 0.25 L16.72 4.34 L17.49 4.49 L19.48 0.90 L21.80 1.86 L20.67 5.81 L21.32 6.24 L24.54 3.68 L26.32 5.46 L23.76 8.68 L24.19 9.33 L28.14 8.20 L29.10 10.52 L25.51 12.51 L25.66 13.28 L29.75 13.74 L29.75 16.26 L25.66 16.72 L25.51 17.49 L29.10 19.48 L28.14 21.80 L24.19 20.67 L23.76 21.32 L26.32 24.54 L24.54 26.32 L21.32 23.76 L20.67 24.19 L21.80 28.14 L19.48 29.10 L17.49 25.51 L16.72 25.66 L16.26 29.75 L13.74 29.75 L13.28 25.66 L12.51 25.51 L10.52 29.10 L8.20 28.14 L9.33 24.19 L8.68 23.76 L5.46 26.32 L3.68 24.54 L6.24 21.32 L5.81 20.67 L1.86 21.80 L0.90 19.48 L4.49 17.49 L4.34 16.72 L0.25 16.26 L0.25 13.74 L4.34 13.28 L4.49 12.51 L0.90 10.52 L1.86 8.20 L5.81 9.33 L6.24 8.68 L3.68 5.46 L5.46 3.68 L8.68 6.24 L9.33 5.81 L8.20 1.86 L10.52 0.90 L12.51 4.49 Z" fill="#4469a1"/><circle cx="15" cy="15" r="7.3" fill="#fdfdfe"/><path d="M15 15 L15.00 23.50 M15 15 L8.04 10.12 M15 15 L21.96 10.12 " stroke="#4469a1" stroke-width="2.3" fill="none"/></svg>
<div class="t" style="left:101.5px;top:920.29px;font-size:22px;line-height:22px;color:#000;letter-spacing:-0.37px;">Display Format</div>
<svg class="a" style="left:64px;top:957.0px;" width="30" height="30" viewBox="0 0 30 30"><path d="M13.28 4.34 L13.74 0.25 L16.26 0.25 L16.72 4.34 L17.49 4.49 L19.48 0.90 L21.80 1.86 L20.67 5.81 L21.32 6.24 L24.54 3.68 L26.32 5.46 L23.76 8.68 L24.19 9.33 L28.14 8.20 L29.10 10.52 L25.51 12.51 L25.66 13.28 L29.75 13.74 L29.75 16.26 L25.66 16.72 L25.51 17.49 L29.10 19.48 L28.14 21.80 L24.19 20.67 L23.76 21.32 L26.32 24.54 L24.54 26.32 L21.32 23.76 L20.67 24.19 L21.80 28.14 L19.48 29.10 L17.49 25.51 L16.72 25.66 L16.26 29.75 L13.74 29.75 L13.28 25.66 L12.51 25.51 L10.52 29.10 L8.20 28.14 L9.33 24.19 L8.68 23.76 L5.46 26.32 L3.68 24.54 L6.24 21.32 L5.81 20.67 L1.86 21.80 L0.90 19.48 L4.49 17.49 L4.34 16.72 L0.25 16.26 L0.25 13.74 L4.34 13.28 L4.49 12.51 L0.90 10.52 L1.86 8.20 L5.81 9.33 L6.24 8.68 L3.68 5.46 L5.46 3.68 L8.68 6.24 L9.33 5.81 L8.20 1.86 L10.52 0.90 L12.51 4.49 Z" fill="#4469a1"/><circle cx="15" cy="15" r="7.3" fill="#fdfdfe"/><path d="M15 15 L15.00 23.50 M15 15 L8.04 10.12 M15 15 L21.96 10.12 " stroke="#4469a1" stroke-width="2.3" fill="none"/></svg>
<div class="t" style="left:101.5px;top:964.29px;font-size:22px;line-height:22px;color:#000;letter-spacing:-0.27px;">Session</div>
<svg class="a" style="left:64px;top:1001.0px;" width="30" height="30" viewBox="0 0 30 30"><path d="M13.28 4.34 L13.74 0.25 L16.26 0.25 L16.72 4.34 L17.49 4.49 L19.48 0.90 L21.80 1.86 L20.67 5.81 L21.32 6.24 L24.54 3.68 L26.32 5.46 L23.76 8.68 L24.19 9.33 L28.14 8.20 L29.10 10.52 L25.51 12.51 L25.66 13.28 L29.75 13.74 L29.75 16.26 L25.66 16.72 L25.51 17.49 L29.10 19.48 L28.14 21.80 L24.19 20.67 L23.76 21.32 L26.32 24.54 L24.54 26.32 L21.32 23.76 L20.67 24.19 L21.80 28.14 L19.48 29.10 L17.49 25.51 L16.72 25.66 L16.26 29.75 L13.74 29.75 L13.28 25.66 L12.51 25.51 L10.52 29.10 L8.20 28.14 L9.33 24.19 L8.68 23.76 L5.46 26.32 L3.68 24.54 L6.24 21.32 L5.81 20.67 L1.86 21.80 L0.90 19.48 L4.49 17.49 L4.34 16.72 L0.25 16.26 L0.25 13.74 L4.34 13.28 L4.49 12.51 L0.90 10.52 L1.86 8.20 L5.81 9.33 L6.24 8.68 L3.68 5.46 L5.46 3.68 L8.68 6.24 L9.33 5.81 L8.20 1.86 L10.52 0.90 L12.51 4.49 Z" fill="#4469a1"/><circle cx="15" cy="15" r="7.3" fill="#fdfdfe"/><path d="M15 15 L15.00 23.50 M15 15 L8.04 10.12 M15 15 L21.96 10.12 " stroke="#4469a1" stroke-width="2.3" fill="none"/></svg>
<div class="t" style="left:101.5px;top:1008.29px;font-size:22px;line-height:22px;color:#000;letter-spacing:-0.37px;">Crash Data</div>
<svg class="a" style="left:64px;top:1045.0px;" width="30" height="30" viewBox="0 0 30 30"><path d="M13.28 4.34 L13.74 0.25 L16.26 0.25 L16.72 4.34 L17.49 4.49 L19.48 0.90 L21.80 1.86 L20.67 5.81 L21.32 6.24 L24.54 3.68 L26.32 5.46 L23.76 8.68 L24.19 9.33 L28.14 8.20 L29.10 10.52 L25.51 12.51 L25.66 13.28 L29.75 13.74 L29.75 16.26 L25.66 16.72 L25.51 17.49 L29.10 19.48 L28.14 21.80 L24.19 20.67 L23.76 21.32 L26.32 24.54 L24.54 26.32 L21.32 23.76 L20.67 24.19 L21.80 28.14 L19.48 29.10 L17.49 25.51 L16.72 25.66 L16.26 29.75 L13.74 29.75 L13.28 25.66 L12.51 25.51 L10.52 29.10 L8.20 28.14 L9.33 24.19 L8.68 23.76 L5.46 26.32 L3.68 24.54 L6.24 21.32 L5.81 20.67 L1.86 21.80 L0.90 19.48 L4.49 17.49 L4.34 16.72 L0.25 16.26 L0.25 13.74 L4.34 13.28 L4.49 12.51 L0.90 10.52 L1.86 8.20 L5.81 9.33 L6.24 8.68 L3.68 5.46 L5.46 3.68 L8.68 6.24 L9.33 5.81 L8.20 1.86 L10.52 0.90 L12.51 4.49 Z" fill="#4469a1"/><circle cx="15" cy="15" r="7.3" fill="#fdfdfe"/><path d="M15 15 L15.00 23.50 M15 15 L8.04 10.12 M15 15 L21.96 10.12 " stroke="#4469a1" stroke-width="2.3" fill="none"/></svg>
<div class="t" style="left:101.5px;top:1052.29px;font-size:22px;line-height:22px;color:#000;letter-spacing:-0.39px;">System Configuration</div>
<svg class="a" style="left:64px;top:1089.0px;" width="30" height="30" viewBox="0 0 30 30"><path d="M13.28 4.34 L13.74 0.25 L16.26 0.25 L16.72 4.34 L17.49 4.49 L19.48 0.90 L21.80 1.86 L20.67 5.81 L21.32 6.24 L24.54 3.68 L26.32 5.46 L23.76 8.68 L24.19 9.33 L28.14 8.20 L29.10 10.52 L25.51 12.51 L25.66 13.28 L29.75 13.74 L29.75 16.26 L25.66 16.72 L25.51 17.49 L29.10 19.48 L28.14 21.80 L24.19 20.67 L23.76 21.32 L26.32 24.54 L24.54 26.32 L21.32 23.76 L20.67 24.19 L21.80 28.14 L19.48 29.10 L17.49 25.51 L16.72 25.66 L16.26 29.75 L13.74 29.75 L13.28 25.66 L12.51 25.51 L10.52 29.10 L8.20 28.14 L9.33 24.19 L8.68 23.76 L5.46 26.32 L3.68 24.54 L6.24 21.32 L5.81 20.67 L1.86 21.80 L0.90 19.48 L4.49 17.49 L4.34 16.72 L0.25 16.26 L0.25 13.74 L4.34 13.28 L4.49 12.51 L0.90 10.52 L1.86 8.20 L5.81 9.33 L6.24 8.68 L3.68 5.46 L5.46 3.68 L8.68 6.24 L9.33 5.81 L8.20 1.86 L10.52 0.90 L12.51 4.49 Z" fill="#4469a1"/><circle cx="15" cy="15" r="7.3" fill="#fdfdfe"/><path d="M15 15 L15.00 23.50 M15 15 L8.04 10.12 M15 15 L21.96 10.12 " stroke="#4469a1" stroke-width="2.3" fill="none"/></svg>
<div class="t" style="left:101.5px;top:1096.29px;font-size:22px;line-height:22px;color:#000;letter-spacing:-0.35px;">System Logging</div>
<svg class="a" style="left:64px;top:1133.0px;" width="30" height="30" viewBox="0 0 30 30"><path d="M13.28 4.34 L13.74 0.25 L16.26 0.25 L16.72 4.34 L17.49 4.49 L19.48 0.90 L21.80 1.86 L20.67 5.81 L21.32 6.24 L24.54 3.68 L26.32 5.46 L23.76 8.68 L24.19 9.33 L28.14 8.20 L29.10 10.52 L25.51 12.51 L25.66 13.28 L29.75 13.74 L29.75 16.26 L25.66 16.72 L25.51 17.49 L29.10 19.48 L28.14 21.80 L24.19 20.67 L23.76 21.32 L26.32 24.54 L24.54 26.32 L21.32 23.76 L20.67 24.19 L21.80 28.14 L19.48 29.10 L17.49 25.51 L16.72 25.66 L16.26 29.75 L13.74 29.75 L13.28 25.66 L12.51 25.51 L10.52 29.10 L8.20 28.14 L9.33 24.19 L8.68 23.76 L5.46 26.32 L3.68 24.54 L6.24 21.32 L5.81 20.67 L1.86 21.80 L0.90 19.48 L4.49 17.49 L4.34 16.72 L0.25 16.26 L0.25 13.74 L4.34 13.28 L4.49 12.51 L0.90 10.52 L1.86 8.20 L5.81 9.33 L6.24 8.68 L3.68 5.46 L5.46 3.68 L8.68 6.24 L9.33 5.81 L8.20 1.86 L10.52 0.90 L12.51 4.49 Z" fill="#4469a1"/><circle cx="15" cy="15" r="7.3" fill="#fdfdfe"/><path d="M15 15 L15.00 23.50 M15 15 L8.04 10.12 M15 15 L21.96 10.12 " stroke="#4469a1" stroke-width="2.3" fill="none"/></svg>
<div class="t" style="left:101.5px;top:1140.29px;font-size:22px;line-height:22px;color:#000;letter-spacing:-0.33px;">Network Access</div>
<svg class="a" style="left:64px;top:1177.0px;" width="30" height="30" viewBox="0 0 30 30"><path d="M13.28 4.34 L13.74 0.25 L16.26 0.25 L16.72 4.34 L17.49 4.49 L19.48 0.90 L21.80 1.86 L20.67 5.81 L21.32 6.24 L24.54 3.68 L26.32 5.46 L23.76 8.68 L24.19 9.33 L28.14 8.20 L29.10 10.52 L25.51 12.51 L25.66 13.28 L29.75 13.74 L29.75 16.26 L25.66 16.72 L25.51 17.49 L29.10 19.48 L28.14 21.80 L24.19 20.67 L23.76 21.32 L26.32 24.54 L24.54 26.32 L21.32 23.76 L20.67 24.19 L21.80 28.14 L19.48 29.10 L17.49 25.51 L16.72 25.66 L16.26 29.75 L13.74 29.75 L13.28 25.66 L12.51 25.51 L10.52 29.10 L8.20 28.14 L9.33 24.19 L8.68 23.76 L5.46 26.32 L3.68 24.54 L6.24 21.32 L5.81 20.67 L1.86 21.80 L0.90 19.48 L4.49 17.49 L4.34 16.72 L0.25 16.26 L0.25 13.74 L4.34 13.28 L4.49 12.51 L0.90 10.52 L1.86 8.20 L5.81 9.33 L6.24 8.68 L3.68 5.46 L5.46 3.68 L8.68 6.24 L9.33 5.81 L8.20 1.86 L10.52 0.90 L12.51 4.49 Z" fill="#4469a1"/><circle cx="15" cy="15" r="7.3" fill="#fdfdfe"/><path d="M15 15 L15.00 23.50 M15 15 L8.04 10.12 M15 15 L21.96 10.12 " stroke="#4469a1" stroke-width="2.3" fill="none"/></svg>
<div class="t" style="left:101.5px;top:1184.29px;font-size:22px;line-height:22px;color:#000;letter-spacing:-0.31px;">Host Access</div>
<div class="a" style="left:8px;top:1231.5px;width:18px;height:18px;border:1.6px solid #8f9ab2;border-radius:3px;background:linear-gradient(#f7f8fb,#e4e8ef 45%,#c5ccd9);box-shadow:0 1px 1px rgba(90,100,120,.35);"></div><div class="a" style="left:11.8px;top:1238.9px;width:10.6px;height:3px;background:#4b5669;"></div>
<svg class="a" style="left:33.6px;top:1223.9px;" width="30" height="25" viewBox="0 0 30 25"><path d="M5 12 V8.6 a5.6 5.6 0 0 1 11.2 0 V12" fill="#e9eef6" stroke="#3c5f97" stroke-width="4"/><rect x="0" y="11" width="20.2" height="13.6" rx="2" fill="#3c5f97"/><path d="M10.6 17.2 L15.2 13 V15.7 H20.4 V18.7 H15.2 V21.4 Z" fill="#fff"/><path d="M20 15.7 H23.4 V12.2 L29.2 17.2 L23.4 22.2 V18.7 H20 Z" fill="#3c5f97"/></svg>
<div class="t" style="left:71.0px;top:1228.29px;font-size:22px;line-height:22px;color:#000;letter-spacing:-0.43px;">Advanced Routing</div>
<svg class="a" style="left:65.6px;top:1275.9px;" width="30" height="25" viewBox="0 0 30 25"><path d="M5 12 V8.6 a5.6 5.6 0 0 1 11.2 0 V12" fill="#e9eef6" stroke="#3c5f97" stroke-width="4"/><rect x="0" y="11" width="20.2" height="13.6" rx="2" fill="#3c5f97"/><path d="M10.6 17.2 L15.2 13 V15.7 H20.4 V18.7 H15.2 V21.4 Z" fill="#fff"/><path d="M20 15.7 H23.4 V12.2 L29.2 17.2 L23.4 22.2 V18.7 H20 Z" fill="#3c5f97"/></svg>
<div class="t" style="left:101.5px;top:1280.29px;font-size:22px;line-height:22px;color:#000;letter-spacing:-0.23px;">DHCP Relay</div>
<svg class="a" style="left:65.6px;top:1319.9px;" width="30" height="25" viewBox="0 0 30 25"><path d="M5 12 V8.6 a5.6 5.6 0 0 1 11.2 0 V12" fill="#e9eef6" stroke="#3c5f97" stroke-width="4"/><rect x="0" y="11" width="20.2" height="13.6" rx="2" fill="#3c5f97"/><path d="M10.6 17.2 L15.2 13 V15.7 H20.4 V18.7 H15.2 V21.4 Z" fill="#fff"/><path d="M20 15.7 H23.4 V12.2 L29.2 17.2 L23.4 22.2 V18.7 H20 Z" fill="#3c5f97"/></svg>
<div class="t" style="left:101.5px;top:1324.29px;font-size:22px;line-height:22px;color:#000;letter-spacing:-0.2px;">BGP</div>
<svg class="a" style="left:65.6px;top:1363.9px;" width="30" height="25" viewBox="0 0 30 25"><path d="M5 12 V8.6 a5.6 5.6 0 0 1 11.2 0 V12" fill="#e9eef6" stroke="#3c5f97" stroke-width="4"/><rect x="0" y="11" width="20.2" height="13.6" rx="2" fill="#3c5f97"/><path d="M10.6 17.2 L15.2 13 V15.7 H20.4 V18.7 H15.2 V21.4 Z" fill="#fff"/><path d="M20 15.7 H23.4 V12.2 L29.2 17.2 L23.4 22.2 V18.7 H20 Z" fill="#3c5f97"/></svg>
<div class="t" style="left:101.0px;top:1368.29px;font-size:22px;line-height:22px;color:#000;letter-spacing:0.6px;">IGMP</div>
<svg class="a" style="left:65.6px;top:1407.9px;" width="30" height="25" viewBox="0 0 30 25"><path d="M5 12 V8.6 a5.6 5.6 0 0 1 11.2 0 V12" fill="#e9eef6" stroke="#3c5f97" stroke-width="4"/><rect x="0" y="11" width="20.2" height="13.6" rx="2" fill="#3c5f97"/><path d="M10.6 17.2 L15.2 13 V15.7 H20.4 V18.7 H15.2 V21.4 Z" fill="#fff"/><path d="M20 15.7 H23.4 V12.2 L29.2 17.2 L23.4 22.2 V18.7 H20 Z" fill="#3c5f97"/></svg>
<div class="t" style="left:101.0px;top:1412.29px;font-size:22px;line-height:22px;color:#000;letter-spacing:-0.1px;">IP Broadcast Helper</div>
<svg class="a" style="left:65.6px;top:1451.9px;" width="30" height="25" viewBox="0 0 30 25"><path d="M5 12 V8.6 a5.6 5.6 0 0 1 11.2 0 V12" fill="#e9eef6" stroke="#3c5f97" stroke-width="4"/><rect x="0" y="11" width="20.2" height="13.6" rx="2" fill="#3c5f97"/><path d="M10.6 17.2 L15.2 13 V15.7 H20.4 V18.7 H15.2 V21.4 Z" fill="#fff"/><path d="M20 15.7 H23.4 V12.2 L29.2 17.2 L23.4 22.2 V18.7 H20 Z" fill="#3c5f97"/></svg>
<div class="t" style="left:101.5px;top:1456.29px;font-size:22px;line-height:22px;color:#000;letter-spacing:1.8px;">PIM</div>
<svg class="a" style="left:65.6px;top:1495.9px;" width="30" height="25" viewBox="0 0 30 25"><path d="M5 12 V8.6 a5.6 5.6 0 0 1 11.2 0 V12" fill="#e9eef6" stroke="#3c5f97" stroke-width="4"/><rect x="0" y="11" width="20.2" height="13.6" rx="2" fill="#3c5f97"/><path d="M10.6 17.2 L15.2 13 V15.7 H20.4 V18.7 H15.2 V21.4 Z" fill="#fff"/><path d="M20 15.7 H23.4 V12.2 L29.2 17.2 L23.4 22.2 V18.7 H20 Z" fill="#3c5f97"/></svg>
<div class="t" style="left:101.5px;top:1500.29px;font-size:22px;line-height:22px;color:#000;letter-spacing:-0.32px;">Static Multicast Routes</div>
<svg class="a" style="left:65.6px;top:1539.9px;" width="30" height="25" viewBox="0 0 30 25"><path d="M5 12 V8.6 a5.6 5.6 0 0 1 11.2 0 V12" fill="#e9eef6" stroke="#3c5f97" stroke-width="4"/><rect x="0" y="11" width="20.2" height="13.6" rx="2" fill="#3c5f97"/><path d="M10.6 17.2 L15.2 13 V15.7 H20.4 V18.7 H15.2 V21.4 Z" fill="#fff"/><path d="M20 15.7 H23.4 V12.2 L29.2 17.2 L23.4 22.2 V18.7 H20 Z" fill="#3c5f97"/></svg>
<div class="t" style="left:101.5px;top:1544.29px;font-size:22px;line-height:22px;color:#000;letter-spacing:-0.25px;">MFC Static Entries</div>
<svg class="a" style="left:65.6px;top:1583.9px;" width="30" height="25" viewBox="0 0 30 25"><path d="M5 12 V8.6 a5.6 5.6 0 0 1 11.2 0 V12" fill="#e9eef6" stroke="#3c5f97" stroke-width="4"/><rect x="0" y="11" width="20.2" height="13.6" rx="2" fill="#3c5f97"/><path d="M10.6 17.2 L15.2 13 V15.7 H20.4 V18.7 H15.2 V21.4 Z" fill="#fff"/><path d="M20 15.7 H23.4 V12.2 L29.2 17.2 L23.4 22.2 V18.7 H20 Z" fill="#3c5f97"/></svg>
<div class="t" style="left:101.1px;top:1588.29px;font-size:22px;line-height:22px;color:#000;letter-spacing:1.65px;">RIP</div>
<svg class="a" style="left:65.6px;top:1627.9px;" width="30" height="25" viewBox="0 0 30 25"><path d="M5 12 V8.6 a5.6 5.6 0 0 1 11.2 0 V12" fill="#e9eef6" stroke="#3c5f97" stroke-width="4"/><rect x="0" y="11" width="20.2" height="13.6" rx="2" fill="#3c5f97"/><path d="M10.6 17.2 L15.2 13 V15.7 H20.4 V18.7 H15.2 V21.4 Z" fill="#fff"/><path d="M20 15.7 H23.4 V12.2 L29.2 17.2 L23.4 22.2 V18.7 H20 Z" fill="#3c5f97"/></svg>
<div class="t" style="left:101.1px;top:1632.29px;font-size:22px;line-height:22px;color:#000;letter-spacing:-0.2px;">IP Reachability Detection</div>
<svg class="a" style="left:65.6px;top:1671.9px;" width="30" height="25" viewBox="0 0 30 25"><path d="M5 12 V8.6 a5.6 5.6 0 0 1 11.2 0 V12" fill="#e9eef6" stroke="#3c5f97" stroke-width="4"/><rect x="0" y="11" width="20.2" height="13.6" rx="2" fill="#3c5f97"/><path d="M10.6 17.2 L15.2 13 V15.7 H20.4 V18.7 H15.2 V21.4 Z" fill="#fff"/><path d="M20 15.7 H23.4 V12.2 L29.2 17.2 L23.4 22.2 V18.7 H20 Z" fill="#3c5f97"/></svg>
<div class="t" style="left:101.1px;top:1676.29px;font-size:22px;line-height:22px;color:#000;letter-spacing:0.1px;">IPsec Routing</div>
<svg class="a" style="left:65.6px;top:1715.9px;" width="30" height="25" viewBox="0 0 30 25"><path d="M5 12 V8.6 a5.6 5.6 0 0 1 11.2 0 V12" fill="#e9eef6" stroke="#3c5f97" stroke-width="4"/><rect x="0" y="11" width="20.2" height="13.6" rx="2" fill="#3c5f97"/><path d="M10.6 17.2 L15.2 13 V15.7 H20.4 V18.7 H15.2 V21.4 Z" fill="#fff"/><path d="M20 15.7 H23.4 V12.2 L29.2 17.2 L23.4 22.2 V18.7 H20 Z" fill="#3c5f97"/></svg>
<div class="t" style="left:101.1px;top:1720.29px;font-size:22px;line-height:22px;color:#000;letter-spacing:1.32px;">IS-IS</div>
<svg class="a" style="left:65.6px;top:1759.9px;" width="30" height="25" viewBox="0 0 30 25"><path d="M5 12 V8.6 a5.6 5.6 0 0 1 11.2 0 V12" fill="#e9eef6" stroke="#3c5f97" stroke-width="4"/><rect x="0" y="11" width="20.2" height="13.6" rx="2" fill="#3c5f97"/><path d="M10.6 17.2 L15.2 13 V15.7 H20.4 V18.7 H15.2 V21.4 Z" fill="#fff"/><path d="M20 15.7 H23.4 V12.2 L29.2 17.2 L23.4 22.2 V18.7 H20 Z" fill="#3c5f97"/></svg>
<div class="a" style="left:0px;top:95px;width:64px;height:1669px;background:linear-gradient(90deg,rgba(0,0,0,.135),rgba(0,0,0,.085) 18%,rgba(0,0,0,.045) 42%,rgba(0,0,0,.015) 72%,rgba(0,0,0,0));-webkit-mask-image:linear-gradient(rgba(0,0,0,.45) 0,rgba(0,0,0,.6) 6%,#000 11%,#000 70%,transparent 97%);mask-image:linear-gradient(rgba(0,0,0,.45) 0,rgba(0,0,0,.6) 6%,#000 11%,#000 70%,transparent 97%);pointer-events:none;"></div>
<div class="a" style="left:0px;top:1762px;width:489px;height:2px;background:#dedede;"></div>
<svg class="a" style="left:518px;top:895px;" width="10" height="70" viewBox="0 0 10 70"><path d="M0.4 8.5 L9.6 0.4 V69.6 L0.4 61.5 Z" fill="#ececec" stroke="#dcdcdc" stroke-width="0.8"/><path d="M2 35 L8.2 30 V40 Z" fill="#444"/></svg>
<div class="a" style="left:0px;top:0px;width:3244px;height:89px;background:#4a5a75;border-bottom:2px solid #9b9b9b;"></div>
<div class="t" style="left:17px;top:8.30px;font-size:24px;line-height:24px;color:#bdd2fb;letter-spacing:-0.32px;">Check Point ElasticXL</div>
<div class="t" style="left:18px;top:42.60px;font-size:26px;line-height:26px;color:#bdd2fb;font-weight:bold;letter-spacing:0.15px;">vsnext1-s01-01</div>
<div class="t" style="left:394.5px;top:33.00px;font-size:24px;line-height:24px;color:#bdd2fb;font-weight:bold;letter-spacing:-0.25px;">Virtual System:</div>
<div class="a" style="left:600px;top:21px;width:310px;height:46px;background:#fff;border-radius:6px;"></div>
<svg class="a" style="left:609px;top:35px;" width="30" height="19" viewBox="0 0 30 19"><path d="M1.2 3.6 L7.9 7.6 L15 -0.4 L22 7.6 L28.8 3.6 L26.9 13.5 L3.1 13.5 Z" fill="#31405d" stroke="#31405d" stroke-width="0.8" stroke-linejoin="round"/><path d="M3 13.4 H27 L26.3 19 H3.7 Z" fill="#657289"/></svg>
<div class="t" style="left:659.6px;top:34.99px;font-size:22px;line-height:22px;color:#000;letter-spacing:0.8px;-webkit-text-stroke:0.5px #000;">| ID 0</div>
<svg class="a" style="left:875px;top:39px;" width="20" height="11" viewBox="0 0 20 11"><path d="M0.5 0.5 H19.5 L10 10.8 Z" fill="#000084"/></svg>
<div class="a" style="left:932px;top:29px;width:2px;height:28px;background:#a6cbff;"></div>
<div class="a" style="left:1000px;top:29px;width:2px;height:28px;background:#a6cbff;"></div>
<div class="a" style="left:1068px;top:29px;width:2px;height:28px;background:#a6cbff;"></div>
<svg class="a" style="left:953px;top:30px;" width="24" height="24" viewBox="0 0 24 24"><path d="M6.81 0.59 L0.59 6.81 L3.56 9.78 L9.78 3.56 Z M10.63 4.41 L4.41 10.63 L16.88 23.1 L23.4 23.1 L23.4 17.18 Z" fill="#a9bbdd"/></svg>
<svg class="a" style="left:1020px;top:29px;" width="28" height="26" viewBox="0 0 28 26"><rect x="0" y="0" width="28" height="26" rx="4.5" fill="#a9bbdd"/><path d="M6.5 7 L11.5 11 L6.5 15" fill="none" stroke="#4a5a75" stroke-width="2.6" stroke-linecap="round" stroke-linejoin="round"/><path d="M12.6 19 H19.4" stroke="#4a5a75" stroke-width="2.4" stroke-linecap="round"/></svg>
<svg class="a" style="left:1091.5px;top:29px;" width="21" height="28" viewBox="0 0 21 28"><path d="M3.5 0 H10.5 L20.5 10 V24.5 a3.5 3.5 0 0 1 -3.5 3.5 H3.5 a3.5 3.5 0 0 1 -3.5 -3.5 V3.5 a3.5 3.5 0 0 1 3.5 -3.5 Z" fill="#a9bbdd"/><path d="M10.8 1.2 L19.6 10 H10.8 Z" fill="#4a5a75"/><path d="M4.5 15.4 H16.2 M4.5 19.6 H16.2" stroke="#4a5a75" stroke-width="1.8"/></svg>
<div class="a" style="left:1584px;top:23px;width:400px;height:46px;background:#fff;border-radius:6px;"></div>
<svg class="a" style="left:1594px;top:30px;" width="32" height="30" viewBox="0 0 32 30"><path d="M18.6 18 L28.6 27" stroke="#3a5f98" stroke-width="5.6"/><circle cx="11.8" cy="10.8" r="9.4" fill="#fff" stroke="#446ea6" stroke-width="4.2"/></svg>
<div class="t" style="left:1633.5px;top:36.99px;font-size:22px;line-height:22px;color:#6e6e6e;letter-spacing:-0.2px;">Search</div>
<svg class="a" style="left:2805px;top:31px;" width="30" height="32" viewBox="0 0 30 32"><ellipse cx="15.2" cy="13.4" rx="9.6" ry="12.6" fill="#c5daff"/><path d="M9.5 20 H20.5 V24 Q21 26 29.5 28.5 V32.2 H0.5 V28.5 Q9 26 9.5 24 Z" fill="#c5daff"/></svg>
<div class="t" style="left:2844px;top:37.30px;font-size:24px;line-height:24px;color:#bdd2fb;font-weight:bold;">admin</div>
<div class="a" style="left:2936px;top:33px;width:2px;height:28px;background:#a6cbff;"></div>
<svg class="a" style="left:2956px;top:33px;" width="28" height="29" viewBox="0 0 28 29"><path d="M14 2 H2 V26.5 H14" fill="none" stroke="#a5b8dc" stroke-width="4"/><path d="M8 14.2 H20" stroke="#a5b8dc" stroke-width="3.6"/><path d="M19 8 L27.5 14.2 L19 20.4 Z" fill="#a5b8dc"/></svg>
<svg class="a" style="left:3026px;top:22px;" width="52" height="50" viewBox="0 0 52 50"><circle cx="19.9" cy="28.1" r="18.5" fill="#e8effd"/><circle cx="37.4" cy="16.4" r="8.7" fill="#4a5a75"/><path d="M12.4 25.6 L22.8 33.4 L31 22" fill="none" stroke="#4a5a75" stroke-width="1.8" opacity=".85"/><circle cx="12.4" cy="25.6" r="2.8" fill="#4a5a75"/><circle cx="22.8" cy="33.4" r="4" fill="#4a5a75"/><circle cx="41.4" cy="9.2" r="6.8" fill="#e8effd"/></svg>
<div class="t" style="left:3082px;top:28.2px;font-family:'Liberation Sans',sans-serif;font-weight:bold;font-size:12.5px;line-height:12px;letter-spacing:0.7px;color:#dfe7f7;">CHECK <span style="color:#b4c0d8">POINT</span></div>
<div class="t" style="left:3081.5px;top:44.4px;font-family:'Liberation Sans',sans-serif;font-size:24.4px;line-height:24px;color:#e4ebf9;"><span style="-webkit-text-stroke:0.9px #e4ebf9;letter-spacing:-0.2px">GAiA</span><span style="color:#c3cee4;letter-spacing:0.1px;margin-left:8.4px">Portal</span></div>
</div></body></html>
